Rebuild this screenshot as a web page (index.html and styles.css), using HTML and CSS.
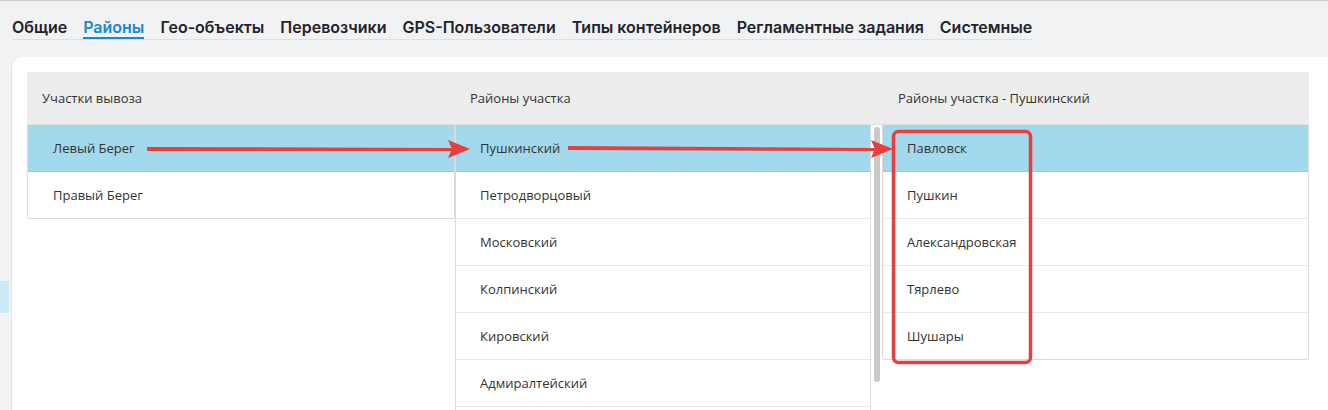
FILE: index.html
```html
<!DOCTYPE html>
<html lang="ru">
<head>
<meta charset="utf-8">
<title>Районы</title>
<link rel="stylesheet" href="styles.css">
</head>
<body>
<div class="layout">
  <aside class="side"><div class="side-item"></div></aside>
  <main class="main">
    <nav class="tabs">
      <a class="tab">Общие</a>
      <a class="tab active">Районы</a>
      <a class="tab">Гео-объекты</a>
      <a class="tab">Перевозчики</a>
      <a class="tab">GPS-Пользователи</a>
      <a class="tab">Типы контейнеров</a>
      <a class="tab">Регламентные задания</a>
      <a class="tab">Системные</a>
    </nav>
    <section class="card">
      <div class="grid head">
        <div class="hcell">Участки вывоза</div>
        <div class="hcell">Районы участка</div>
        <div class="hcell">Районы участка - Пушкинский</div>
      </div>
      <div class="grid body">
        <div class="col1">
          <div class="row sel">Левый Берег</div>
          <div class="row">Правый Берег</div>
        </div>
        <div class="col2">
          <div class="list2">
            <div class="row sel">Пушкинский</div>
            <div class="row">Петродворцовый</div>
            <div class="row">Московский</div>
            <div class="row">Колпинский</div>
            <div class="row">Кировский</div>
            <div class="row">Адмиралтейский</div>
          </div>
          <div class="gutter"><div class="thumb"></div></div>
        </div>
        <div class="col3">
          <div class="row sel">Павловск</div>
          <div class="row">Пушкин</div>
          <div class="row">Александровская</div>
          <div class="row">Тярлево</div>
          <div class="row last">Шушары</div>
        </div>
      </div>
    </section>
  </main>
</div>
<svg class="marks" width="1328" height="410" viewBox="0 0 1328 410" xmlns="http://www.w3.org/2000/svg">
  <g fill="#e83e3e" stroke="none">
    <polygon points="147,147 452,148 452,151 147,151"/>
    <polygon points="448,140 470,149 448,158 452,149"/>
    <polygon points="568,146 875,148 875,151 568,150"/>
    <polygon points="871,140 893,149 871,158 875,149"/>
  </g>
  <rect x="893.5" y="131.5" width="137" height="231" rx="5" ry="5" fill="none" stroke="#e83e3e" stroke-width="3.5"/>
</svg>
</body>
</html>
```

FILE: styles.css
```css
* { box-sizing: border-box; }
html, body { margin: 0; padding: 0; }
body {
  background: #f1f2f4;
  border-top: 1px solid #c9cacc;
  height: 410px;
  overflow: hidden;
  font-family: "Open Sans", "Liberation Sans", sans-serif;
  color: #333;
}
.layout { display: flex; }
.side { width: 9px; flex: none; }
.side-item { margin-top: 280px; height: 32px; background: #cde9f6; }
.main { flex: 1; margin-left: 3px; min-width: 0; }

.tabs {
  display: flex;
  gap: 16px;
  width: fit-content;
  border-bottom: 1px solid #dcdfe3;
}
.tab {
  font-family: Inter, "Noto Sans", sans-serif;
  font-weight: 600;
  font-size: 16px;
  line-height: 20px;
  color: #23232a;
  padding-top: 16px;
  padding-bottom: 0;
  border-bottom: 2px solid transparent;
}
.tab.active { color: #1a88d1; border-bottom-color: #1a88d1; }

.card {
  margin-top: 17px;
  background: #fff;
  border-radius: 10px 0 0 0;
  padding: 15px 0 0 15px;
  height: 400px;
  box-shadow: -1px 0 0 #e3e4e6;
}
.grid {
  display: grid;
  grid-template-columns: 428px 427px 427px;
  width: 1282px;
}
.head {
  background: #ededed;
  height: 53px;
  border-bottom: 1px solid #dedede;
}
.hcell {
  font-size: 13px;
  line-height: 52px;
  padding-left: 15px;
  color: #333;
}
.hcell:nth-child(3) { padding-left: 16px; }

.body { align-items: start; }
.row {
  height: 47px;
  line-height: 46px;
  font-size: 13px;
  padding-left: 25px;
  border-bottom: 1px solid #e8e8e8;
  white-space: nowrap;
}
.row.sel { background: #a2d9ec; border-bottom-color: #93cde2; }

.col1 {
  border: 1px solid #dadada;
  border-top: none;
  width: 428px;
  border-radius: 0 0 2px 2px;
}
.col1 .row { padding-left: 25px; }
.col1 .row:last-child { border-bottom: none; height: 46px; }

.col2 {
  display: flex;
  height: 340px;
}
.list2 {
  width: 416px;
  border-left: 1px solid #dadada;
  border-right: 1px solid #dadada;
}
.list2 .row { padding-left: 24px; }
.gutter { width: 11px; padding: 2px 0 0 3px; }
.thumb {
  width: 6px;
  height: 255px;
  background: #c9c9c9;
  border-radius: 3px;
}

.col3 {
  border: 1px solid #dadada;
  border-top: none;
  border-radius: 0 0 3px 3px;
}
.col3 .row { padding-left: 24px; }
.col3 .row.last { border-bottom: none; height: 46px; }

.marks {
  position: absolute;
  left: 0;
  top: 0;
  pointer-events: none;
}
```
